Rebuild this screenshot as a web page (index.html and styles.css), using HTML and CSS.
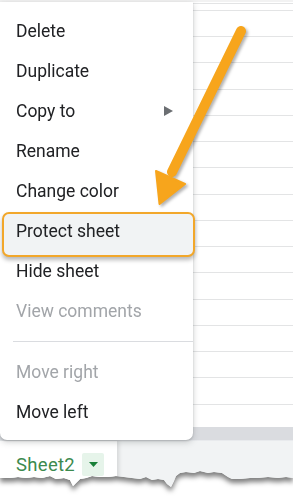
FILE: index.html
```html
<!DOCTYPE html>
<html>
<head>
<meta charset="utf-8">
<link rel="stylesheet" href="styles.css">
</head>
<body>
<div class="stage">
  <div class="paper">
    <div class="grid">
      <div class="menu">
        <div class="item">Delete</div>
        <div class="item">Duplicate</div>
        <div class="item sub">Copy to <svg class="caret" width="9" height="10" viewBox="0 0 9 10"><path d="M0 0 L9 5 L0 10 Z" fill="#6b6e72"/></svg></div>
        <div class="item">Rename</div>
        <div class="item">Change color</div>
        <div class="item hl"><span>Protect sheet</span></div>
        <div class="item">Hide sheet</div>
        <div class="item off">View comments</div>
        <div class="sep"></div>
        <div class="item off">Move right</div>
        <div class="item">Move left</div>
      </div>
    </div>
    <div class="tabbar">
      <div class="tab">
        <span class="tabname">Sheet2</span>
        <span class="drop"><svg width="9" height="5" viewBox="0 0 9 5"><path d="M0 0 L9 0 L4.5 5 Z" fill="#188038"/></svg></span>
      </div>
    </div>
  </div>
  <svg class="arrow" width="293" height="496" viewBox="0 0 293 496">
    <line x1="241" y1="31" x2="172" y2="172" stroke="#f7a51c" stroke-width="10" stroke-linecap="round"/>
    <path d="M156 171 L185 184 L159.5 204 Z" fill="#f7a51c" stroke="#f7a51c" stroke-width="2" stroke-linejoin="round"/>
  </svg>
</div>
</body>
</html>
```

FILE: styles.css
```css
html, body {
  margin: 0;
  padding: 0;
  background: #ffffff;
}
body {
  width: 293px;
  height: 496px;
  overflow: hidden;
  font-family: Roboto, "Liberation Sans", sans-serif;
}
.stage {
  position: relative;
  width: 293px;
  height: 496px;
  filter: drop-shadow(0 4px 2.5px rgba(0, 0, 0, 0.5));
}
.paper {
  display: flex;
  flex-direction: column;
  width: 293px;
  height: 492px;
  clip-path: polygon(0 0, 293px 0, 293px 478px, 286px 477px, 278px 478px, 268px 477px, 258px 478px, 250px 478px, 240px 479px, 232px 479px, 228px 477px, 222px 473px, 214px 472px, 208px 473px, 200px 471px, 194px 473px, 186px 472px, 180px 473px, 176px 476px, 174px 481px, 171px 487px, 167px 484px, 164px 480px, 158px 479px, 152px 480px, 146px 477px, 140px 479px, 132px 478px, 124px 477px, 116px 476px, 108px 477px, 100px 477px, 92px 476px, 86px 478px, 80px 479px, 76px 483px, 73px 486px, 70px 480px, 64px 478px, 56px 479px, 50px 476px, 42px 478px, 34px 477px, 26px 478px, 18px 477px, 10px 478px, 0 478px);
  background: #f1f3f4;
}
.grid {
  position: relative;
  height: 427px;
  flex: none;
  background:
    linear-gradient(#f2f2f2, #f2f2f2) 0 0 / 100% 2px no-repeat,
    repeating-linear-gradient(to bottom, #e3e4e5 0, #e3e4e5 1px, transparent 1px, transparent 26.25px) 0 10px / 100% 100%,
    #ffffff;
  border-bottom: 13px solid #dadce0;
}
.menu {
  position: absolute;
  left: 0;
  top: 2px;
  width: 193px;
  height: 438px;
  box-sizing: border-box;
  padding: 9px 0 8px;
  background: #ffffff;
  border-radius: 0 0 7px 7px;
  box-shadow: 0 2px 6px rgba(60, 64, 67, 0.25), 0 1px 2px rgba(60, 64, 67, 0.2);
  display: flex;
  flex-direction: column;
  z-index: 2;
}
.item {
  position: relative;
  height: 40px;
  flex: none;
  display: flex;
  align-items: center;
  padding-left: 16px;
  font-size: 17.5px;
  color: #202124;
}
.item.off {
  color: #a2a5a9;
}
.item.sub {
  justify-content: space-between;
  padding-right: 20px;
}
.caret {
  display: block;
}
.item.hl span {
  position: relative;
}
.item.hl::before {
  content: "";
  position: absolute;
  left: 2px;
  right: -2px;
  top: 1px;
  bottom: -6px;
  box-sizing: border-box;
  border: 2.5px solid #f2a72a;
  border-radius: 7px;
  background: #f1f3f4;
  box-shadow: 0 3px 4px rgba(0, 0, 0, 0.28);
}
.sep {
  flex: none;
  height: 1px;
  margin: 10px 0 10px 13px;
  background: #dadce0;
}
.tabbar {
  flex: 1;
  display: flex;
  background: #f1f3f4;
  border-top: 1px solid #e8eaed;
}
.tab {
  width: 117px;
  background: #ffffff;
  box-shadow: 2px 0 4px rgba(0, 0, 0, 0.12);
  display: flex;
  align-items: flex-start;
  padding: 12px 0 0 16px;
  box-sizing: border-box;
  gap: 7px;
}
.tabname {
  font-size: 18.5px;
  letter-spacing: 0.3px;
  color: #3c8a4e;
  line-height: 24px;
}
.drop {
  width: 22px;
  height: 23px;
  background: #e6f4ea;
  display: flex;
  align-items: center;
  justify-content: center;
  border-radius: 2px;
}
.arrow {
  position: absolute;
  left: 0;
  top: 0;
  z-index: 5;
  filter: drop-shadow(2px 2px 1.5px rgba(0, 0, 0, 0.3));
}
```
